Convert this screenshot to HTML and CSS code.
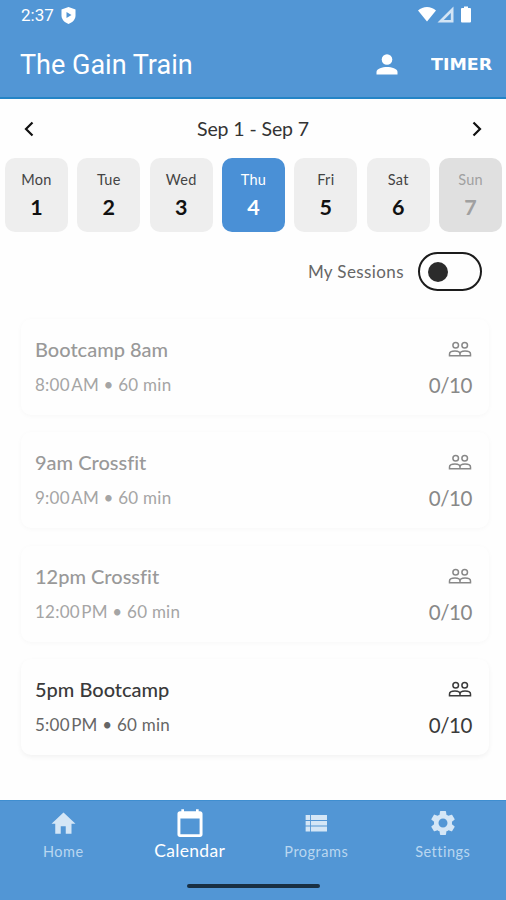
FILE: index.html
```html
<!DOCTYPE html>
<html lang="en">
<head>
    <meta charset="UTF-8">
    <meta name="viewport" content="width=device-width, initial-scale=1.0">
    <title>The Gain Train</title>
    <link rel="stylesheet" href="styles.css">
</head>
<body>
    <svg class="sprite" width="0" height="0">
        <symbol id="people" viewBox="0 0 24 18">
            <g fill="none" stroke="currentColor" stroke-width="1.5">
                <circle cx="7.7" cy="4.200" r="2.800"/>
                <circle cx="16.700" cy="4.200" r="2.800"/>
                <path d="M1.500 14.700v-1.800c0-1.900 2.600-2.900 5.500-2.900s5 1 5 2.900v1.800zM12 14.700v-1.800c0-1.900 2.100-2.900 5-2.900s5.500 1 5.500 2.900v1.800z"/>
            </g>
        </symbol>
    </svg>

    <div class="header">
        <div class="status-bar">
            <span class="clock">2:37</span>
            <svg class="shield" width="15" height="17" viewBox="0 0 15 17">
                <path fill="#fff" d="M7.500 0 14.500 2.500v6c0 4-3 7-7 8.500-4-1.500-7-4.500-7-8.500v-6z"/>
                <path fill="#5296d5" d="M5.500 5v6l5-3z"/>
            </svg>
            <svg class="signals" width="54" height="18" viewBox="0 0 54 18">
                <path fill="#fff" d="M0 4.500C5-.3 13-.3 18 4.500L9 15.500z"/>
                <path fill="#fff" fill-opacity=".75" fill-rule="evenodd" d="M35.500.500v16h-16zM32.800 7l-7 7h7z"/>
                <path fill="#fff" d="M43 3q0-1 1-1h2V.500h4V2h2q1 0 1 1v12.500q0 1-1 1h-8q-1 0-1-1z"/>
            </svg>
        </div>
        <div class="title-bar">
            <h1>The Gain Train</h1>
            <svg class="user" width="22" height="21" viewBox="0 0 22 21" fill="#fff">
                <circle cx="11" cy="5.500" r="5.300"/>
                <path d="M.500 20.500v-2.500c0-3.500 6-5 10.500-5s10.500 1.500 10.500 5v2.500z"/>
            </svg>
            <span class="timer">TIMER</span>
        </div>
    </div>

    <div class="main-content">
        <div class="week-nav">
            <svg width="10" height="16" viewBox="0 0 10 16"><path d="M8.500 1.500 2 8l6.500 6.500"/></svg>
            <span>Sep 1 - Sep 7</span>
            <svg width="10" height="16" viewBox="0 0 10 16"><path d="M1.500 1.500 8 8l-6.500 6.500"/></svg>
        </div>
        <div class="days">
            <div class="day"><span>Mon</span><b>1</b></div>
            <div class="day"><span>Tue</span><b>2</b></div>
            <div class="day"><span>Wed</span><b>3</b></div>
            <div class="day active"><span>Thu</span><b>4</b></div>
            <div class="day"><span>Fri</span><b>5</b></div>
            <div class="day"><span>Sat</span><b>6</b></div>
            <div class="day disabled"><span>Sun</span><b>7</b></div>
        </div>
        <div class="filter">
            <span>My Sessions</span>
            <div class="toggle"><div class="knob"></div></div>
        </div>
        <div class="sessions">
            <div class="card past">
                <div class="info"><h2>Bootcamp 8am</h2><p>8:00&#8202;AM • 60 min</p></div>
                <div class="spots"><svg width="24" height="18"><use href="#people"/></svg><span>0/10</span></div>
            </div>
            <div class="card past">
                <div class="info"><h2>9am Crossfit</h2><p>9:00&#8202;AM • 60 min</p></div>
                <div class="spots"><svg width="24" height="18"><use href="#people"/></svg><span>0/10</span></div>
            </div>
            <div class="card past">
                <div class="info"><h2>12pm Crossfit</h2><p>12:00&#8202;PM • 60 min</p></div>
                <div class="spots"><svg width="24" height="18"><use href="#people"/></svg><span>0/10</span></div>
            </div>
            <div class="card">
                <div class="info"><h2>5pm Bootcamp</h2><p>5:00&#8202;PM • 60 min</p></div>
                <div class="spots"><svg width="24" height="18"><use href="#people"/></svg><span>0/10</span></div>
            </div>
        </div>
    </div>

    <div class="footer">
        <div class="tabs">
            <div class="tab">
                <svg width="30" height="30" viewBox="0 0 24 24"><path d="M10.200 20.500v-6h4v6h4.600v-8h3.200L12.400 3.500 2.800 12.500h3v8z"/></svg>
                <span>Home</span>
            </div>
            <div class="tab current">
                <svg width="32" height="32" viewBox="0 0 24 24"><path d="M19.500 2.500H18.500V1h-2v1.500h-9V1h-2v1.500H4.500c-1.100 0-1.900.8-1.900 1.800v15.600c0 1 .8 1.800 1.900 1.800h15c1.100 0 1.900-.8 1.900-1.800V4.300c0-1-.8-1.800-1.900-1.800zm-.3 17.200H4.800V7.800h14.400z"/></svg>
                <span>Calendar</span>
            </div>
            <div class="tab">
                <svg width="32" height="32" viewBox="0 0 24 24"><path d="M3.700 13.900h3.600v-3.500H3.700zm0 4.900h3.600v-4.100H3.700zm0-9.200h3.600V5.500H3.700zm4.300 4.300h12.800v-3.500H8zm0 4.900h12.800v-4.100H8zm0-13.300v4.100h12.800V5.500z"/></svg>
                <span>Programs</span>
            </div>
            <div class="tab">
                <svg width="30" height="30" viewBox="0 0 24 24"><path d="M19.140 12.940c.04-.3.060-.61.060-.94 0-.32-.02-.64-.07-.94l2.030-1.580c.18-.14.230-.41.120-.61l-1.920-3.320c-.12-.22-.37-.29-.59-.22l-2.390.96c-.5-.38-1.030-.7-1.620-.94l-.36-2.540c-.04-.24-.24-.41-.48-.41h-3.840c-.24 0-.43.170-.47.410l-.36 2.540c-.59.240-1.130.570-1.620.940l-2.390-.96c-.22-.08-.47 0-.59.220L2.740 8.870c-.12.210-.08.470.120.610l2.030 1.580c-.05.300-.09.630-.09.940s.02.640.070.940l-2.030 1.580c-.18.140-.23.410-.12.610l1.920 3.320c.12.220.370.290.590.220l2.390-.96c.5.380 1.030.700 1.620.940l.36 2.540c.05.240.240.410.480.410h3.840c.24 0 .44-.17.470-.41l.36-2.540c.59-.24 1.130-.56 1.620-.94l2.390.96c.22.080.470 0 .59-.22l1.920-3.320c.12-.22.070-.47-.12-.61zM12 15.600c-1.980 0-3.600-1.620-3.600-3.600s1.620-3.600 3.600-3.600 3.600 1.620 3.600 3.600-1.620 3.600-3.600 3.600z"/></svg>
                <span>Settings</span>
            </div>
        </div>
        <div class="home-bar"></div>
    </div>
</body>
</html>
```
FILE: styles.css
```css
* {
    box-sizing: border-box;
}
body {
    margin: 0;
    height: 900px;
    display: flex;
    flex-direction: column;
    font-family: Lato, sans-serif;
    font-variant-ligatures: none;
    background-color: #fefefe;
    color: #222;
    overflow: hidden;
}
h1, h2, p {
    margin: 0;
}
.sprite {
    position: absolute;
}
.header {
    height: 99px;
    background-color: #5296d5;
    border-bottom: 2px solid #2484c6;
    color: white;
    font-family: Roboto, sans-serif;
}
.status-bar {
    display: flex;
    align-items: center;
    height: 30px;
    padding: 0 34px 0 21px;
}
.clock {
    font-size: 17px;
    width: 40px;
}
.signals {
    margin-left: auto;
}
.title-bar {
    display: flex;
    align-items: center;
    height: 69px;
    padding: 0 15px 0 20px;
}
.title-bar h1 {
    flex: 1;
    font-size: 27px;
    font-weight: 400;
}
.timer {
    width: 60px;
    margin-left: 33px;
    font-family: "DejaVu Sans", sans-serif;
    font-size: 16px;
    font-weight: 700;
    transform: scaleX(1.09);
    transform-origin: left;
}
.main-content {
    flex: 1;
}
.week-nav {
    display: flex;
    justify-content: space-between;
    align-items: center;
    height: 59px;
    padding: 0 24px;
    font-size: 19.5px;
    letter-spacing: -0.1px;
    color: #333;
}
.week-nav svg {
    fill: none;
    stroke: #111;
    stroke-width: 2.2;
}
.days {
    display: grid;
    grid-template-columns: repeat(7, 1fr);
    gap: 9.5px;
    padding: 0 4px 0 5px;
}
.day {
    display: flex;
    flex-direction: column;
    align-items: center;
    height: 74px;
    padding-top: 13px;
    border-radius: 10px;
    background-color: #eee;
}
.day span {
    font-size: 14.5px;
    line-height: 18px;
    letter-spacing: 0.3px;
    color: #444;
}
.day b {
    margin-top: 4px;
    font-size: 21.5px;
    line-height: 28px;
    color: #111;
}
.day.active {
    background-color: #4a90d6;
}
.day.active span, .day.active b {
    color: white;
}
.day.disabled {
    background-color: #e0e0e0;
}
.day.disabled span, .day.disabled b {
    color: #a0a0a0;
}
.filter {
    display: flex;
    justify-content: flex-end;
    align-items: center;
    gap: 14px;
    height: 79px;
    padding-right: 24px;
    font-size: 17px;
    letter-spacing: 0.4px;
    color: #666;
}
.toggle {
    display: flex;
    align-items: center;
    width: 64px;
    height: 39px;
    padding-left: 8px;
    border: 2px solid #1c1c1c;
    border-radius: 20px;
}
.knob {
    width: 20px;
    height: 20px;
    border-radius: 50%;
    background-color: #2b2b2b;
}
.sessions {
    display: flex;
    flex-direction: column;
    gap: 17.3px;
    padding: 8px 17px 0 21px;
}
.card {
    display: flex;
    justify-content: space-between;
    height: 96px;
    padding: 17px 17px 0 14px;
    border-radius: 10px;
    background-color: #fefefe;
    box-shadow: 0 2px 5px rgba(0, 0, 0, 0.05);
    color: #3a3a3a;
}
.card h2 {
    font-size: 20px;
    font-weight: 500;
    line-height: 26px;
}
.card p {
    margin-top: 12px;
    font-size: 17px;
    line-height: 22px;
    letter-spacing: 0.25px;
    color: #666;
}
.spots {
    display: flex;
    flex-direction: column;
    align-items: flex-end;
    font-size: 20.5px;
    line-height: 26px;
    letter-spacing: -0.4px;
}
.spots svg {
    margin: 5px 0 13px;
}
.card.past {
    color: #999;
    box-shadow: 0 1px 5px rgba(0, 0, 0, 0.03);
}
.card.past p {
    color: #a5a5a5;
}
.card.past .spots {
    color: #888;
}
.footer {
    height: 100px;
    background-color: #5296d5;
    border-top: 1px solid #3f8ed0;
}
.tabs {
    display: grid;
    grid-template-columns: repeat(4, 1fr);
    height: 83px;
}
.tab {
    display: flex;
    flex-direction: column;
    align-items: center;
    color: #b9d6f0;
    font-size: 14.5px;
    letter-spacing: 0.5px;
}
.tab svg {
    height: 30px;
    margin-top: 7px;
    fill: #d4e6f6;
}
.tab span {
    margin-top: 4px;
    line-height: 20px;
}
.tab.current {
    color: white;
    font-size: 17.5px;
    letter-spacing: 0.3px;
}
.tab.current svg {
    height: 32px;
    fill: white;
}
.tab.current span {
    margin-top: 1px;
}
.home-bar {
    width: 133px;
    height: 4px;
    margin: 0 auto;
    border-radius: 2px;
    background-color: #182f43;
}
```
